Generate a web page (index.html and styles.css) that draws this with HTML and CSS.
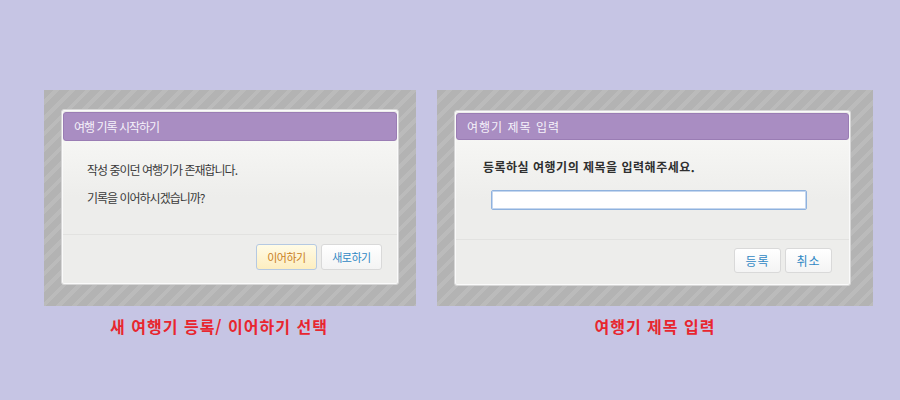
FILE: index.html
```html
<!DOCTYPE html>
<html lang="ko">
<head>
<meta charset="utf-8">
<link rel="stylesheet" href="styles.css">
</head>
<body>
<div class="stage">
  <div class="col col-left">
    <div class="panel panel-left">
      <div class="dialog dialog-left">
        <div class="title">여행 기록 시작하기</div>
        <div class="body body-left">
          <p class="msg">작성 중이던 여행기가 존재합니다.</p>
          <p class="msg">기록을 이어하시겠습니까?</p>
        </div>
        <div class="footer footer-left">
          <button class="btn btn-primary">이어하기</button>
          <button class="btn">새로하기</button>
        </div>
      </div>
    </div>
    <div class="caption caption-left">새 여행기 등록/ 이어하기 선택</div>
  </div>
  <div class="col col-right">
    <div class="panel panel-right">
      <div class="dialog dialog-right">
        <div class="title title-right">여행기 제목 입력</div>
        <div class="body body-right">
          <p class="msg msg-bold">등록하실 여행기의 제목을 입력해주세요.</p>
          <input class="field" type="text">
        </div>
        <div class="footer footer-right">
          <button class="btn btn-small">등록</button>
          <button class="btn btn-small">취소</button>
        </div>
      </div>
    </div>
    <div class="caption">여행기 제목 입력</div>
  </div>
</div>
</body>
</html>
```

FILE: styles.css
```css
* { box-sizing: border-box; }
html, body { margin: 0; padding: 0; }
body {
  width: 900px;
  height: 400px;
  background: #c6c5e4;
  font-family: "Noto Sans CJK KR", "Noto Sans", sans-serif;
  overflow: hidden;
}
.stage {
  display: flex;
  gap: 21px;
  padding: 90px 0 0 44px;
}
.col { display: flex; flex-direction: column; }
.panel {
  height: 216px;
  background: repeating-linear-gradient(135deg, #b3b3b3 0 7px, #bbbbbb 7px 11px);
  padding-left: 17px;
}
.panel-left { width: 372px; padding-top: 19px; }
.panel-right { width: 436px; padding-top: 20px; }
.dialog {
  height: 176px;
  background: #ededeb;
  border: 1px solid #d6d6d6;
  border-radius: 3px;
  padding: 2px 1px 0 1px;
  display: flex;
  flex-direction: column;
  box-shadow: inset 0 0 0 1px #fafafa;
}
.dialog-left { width: 338px; }
.dialog-right { width: 397px; }
.title {
  height: 29px;
  background: #a98dc2;
  border: 1px solid #9a7db4;
  border-radius: 3px;
  color: #f6f2fa;
  font-size: 12px;
  line-height: 27px;
  padding-left: 10px;
  letter-spacing: -1px;
}
.title-right { height: 27px; line-height: 25px; letter-spacing: 1px; }
.body {
  background: linear-gradient(#f6f6f4, #ededeb 60%);
  border-bottom: 1px solid #e2e2e0;
}
.body-left { height: 94px; padding: 20px 0 0 24px; }
.body-right { height: 100px; padding: 18px 0 0 27px; }
.msg {
  margin: 0;
  font-size: 12px;
  line-height: 18px;
  color: #3a3a3a;
  letter-spacing: -1px;
}
.body-left .msg + .msg { margin-top: 10px; }
.msg-bold { font-weight: 600; color: #2f2f2f; letter-spacing: 0.5px; }
.field {
  display: block;
  margin: 14px 0 0 8px;
  width: 316px;
  height: 20px;
  border: 1px solid #8fb2de;
  border-radius: 2px;
  background: #ffffff;
  box-shadow: inset 0 0 0 1px #c5d7ef;
  outline: none;
}
.footer {
  flex: 1;
  display: flex;
  justify-content: flex-end;
  gap: 4px;
}
.footer-left { padding: 9px 15px 0 0; }
.footer-right { padding: 8px 17px 0 0; }
.btn {
  height: 26px;
  padding: 0;
  white-space: nowrap;
  font-family: "Noto Sans CJK KR", "Noto Sans", sans-serif;
  font-size: 11px;
  color: #3088c4;
  background: linear-gradient(#ffffff, #f4f4f4);
  border: 1px solid #d9d9d9;
  border-radius: 3px;
  width: 61px;
  letter-spacing: -0.5px;
}
.btn-primary {
  color: #c97f1e;
  background: linear-gradient(#fffbe6, #fdeec0);
  border-color: #b5c9e2;
}
.btn-small { width: 47px; height: 25px; letter-spacing: 1px; font-size: 12px; }
.caption {
  text-align: center;
  color: #e8262f;
  font-size: 16px;
  font-weight: 700;
  line-height: 20px;
  margin-top: 10px;
  letter-spacing: 1px;
}
.caption-left { padding-right: 22px; }
```
